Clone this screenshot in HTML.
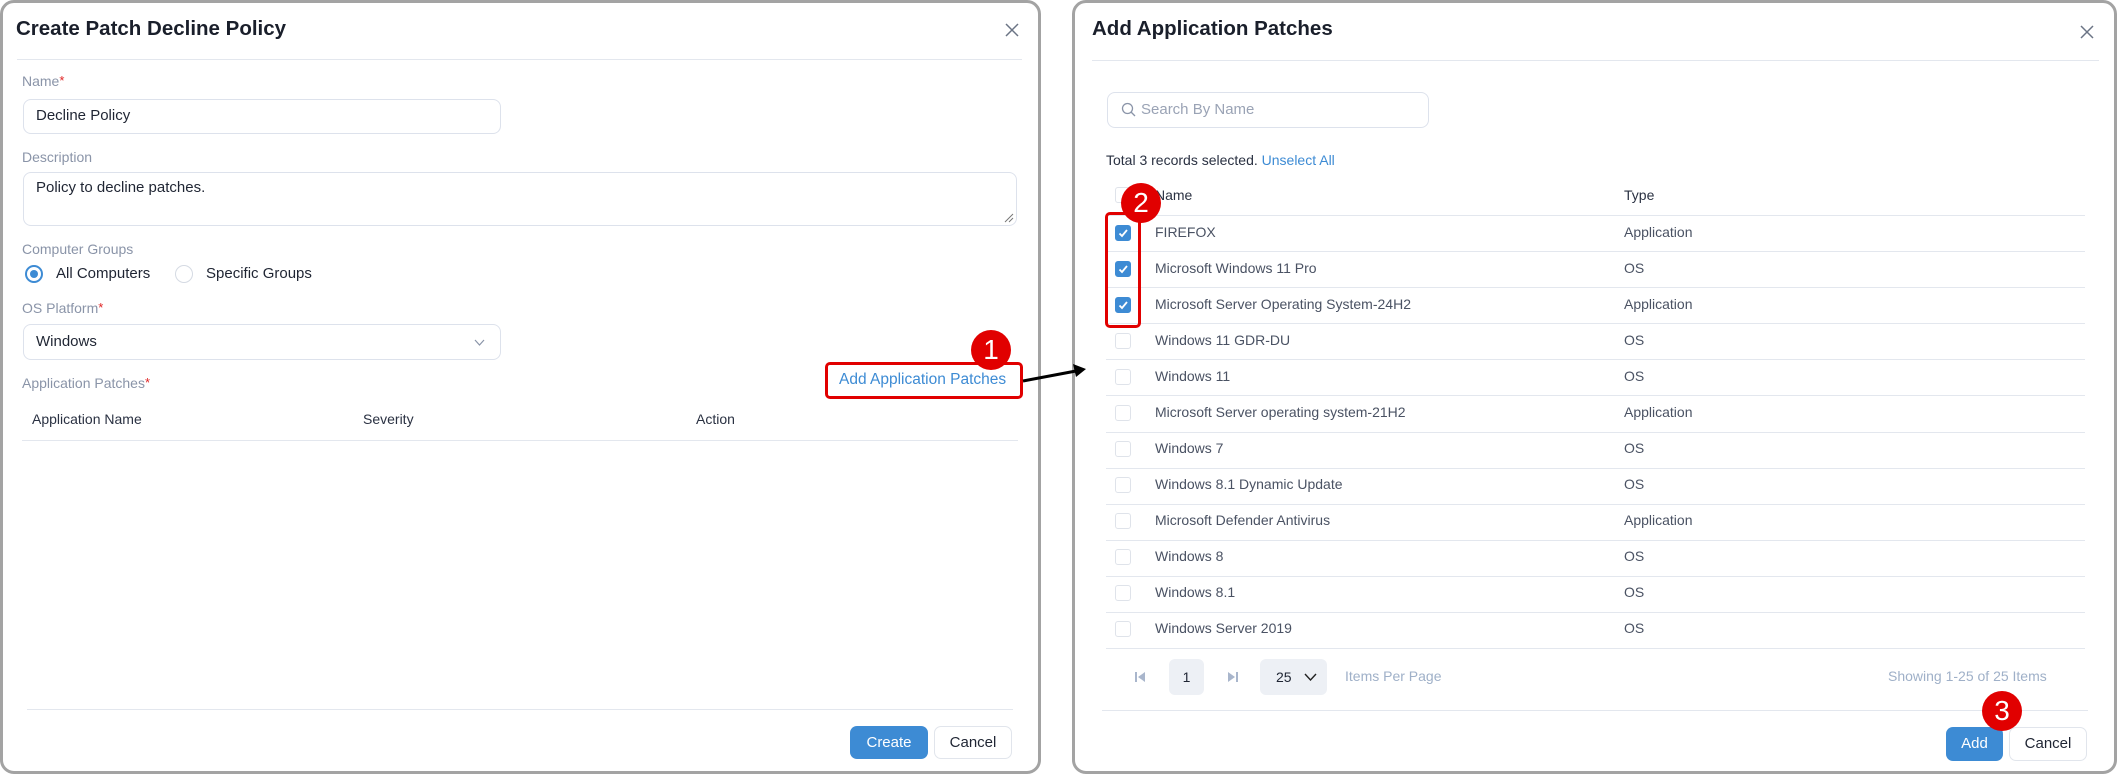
<!DOCTYPE html>
<html><head><meta charset="utf-8"><style>
*{box-sizing:border-box;margin:0;padding:0}
body{width:2117px;height:775px;background:#fff;position:relative;overflow:hidden;font-family:"Liberation Sans",sans-serif;color:#1f2533}
.a{position:absolute;white-space:nowrap}
.panel{position:absolute;border:3px solid #a3a3a3;border-radius:14px;background:#fff}
.lbl{font-size:14px;color:#8a94a8}
.req{color:#e02424;font-size:13px;vertical-align:top}
.inp{position:absolute;border:1px solid #dde2ec;border-radius:8px;background:#fff}
.hl{position:absolute;height:1px;background:#e3e7ee}
.t{font-size:14px;color:#4a5263}
.cb{position:absolute;width:16px;height:16px;border:1px solid #dfe3ea;border-radius:3px;background:#fff}
.cb.on{background:#3d8bd4;border-color:#3d8bd4}
.badge{position:absolute;width:40px;height:40px;border-radius:50%;background:#e10000;color:#fff;font-size:28px;text-align:center;line-height:40px;z-index:3}
.btnp{position:absolute;background:#3d8bd4;color:#fff;border-radius:7px;font-size:15px;text-align:center}
.btn{position:absolute;background:#fff;border:1px solid #e1e5ec;color:#1f2533;border-radius:7px;font-size:15px;text-align:center}
</style></head><body>

<!-- LEFT PANEL -->
<div class="panel" style="left:0;top:0;width:1041px;height:774px"></div>
<div class="a" style="left:16px;top:17px;font-size:20.5px;font-weight:bold;color:#1a1f2b">Create Patch Decline Policy</div>
<svg class="a" style="left:1005px;top:23px" width="14" height="14" viewBox="0 0 14 14"><path d="M1 1L13 13M13 1L1 13" stroke="#6b7485" stroke-width="1.5"/></svg>
<div class="hl" style="left:17px;top:59px;width:1005px"></div>

<div class="a lbl" style="left:22px;top:73px">Name<span class="req">*</span></div>
<div class="inp" style="left:23px;top:99px;width:478px;height:35px"></div>
<div class="a" style="left:36px;top:107px;font-size:15px">Decline Policy</div>

<div class="a lbl" style="left:22px;top:149px">Description</div>
<div class="inp" style="left:23px;top:172px;width:994px;height:54px"></div>
<div class="a" style="left:36px;top:179px;font-size:15px">Policy to decline patches.</div>
<svg class="a" style="left:1004px;top:213px" width="10" height="10"><path d="M9 1L1 9M9 5L5 9" stroke="#777" stroke-width="1"/></svg>

<div class="a lbl" style="left:22px;top:241px">Computer Groups</div>
<div class="a" style="left:25px;top:265px;width:18px;height:18px;border-radius:50%;border:2px solid #3d8bd4"><div style="position:absolute;left:3px;top:3px;width:8px;height:8px;border-radius:50%;background:#3d8bd4"></div></div>
<div class="a" style="left:56px;top:265px;font-size:15px">All Computers</div>
<div class="a" style="left:175px;top:265px;width:18px;height:18px;border-radius:50%;border:1px solid #d5dae3"></div>
<div class="a" style="left:206px;top:265px;font-size:15px">Specific Groups</div>

<div class="a lbl" style="left:22px;top:300px">OS Platform<span class="req">*</span></div>
<div class="inp" style="left:23px;top:324px;width:478px;height:36px"></div>
<div class="a" style="left:36px;top:333px;font-size:15px">Windows</div>
<svg class="a" style="left:474px;top:339px" width="11" height="7"><path d="M1 1L5.5 6L10 1" stroke="#8a94a8" fill="none" stroke-width="1.2"/></svg>

<div class="a lbl" style="left:22px;top:375px">Application Patches<span class="req">*</span></div>
<div class="a" style="left:825px;top:362px;width:198px;height:37px;border:3px solid #e10000;border-radius:5px"></div>
<div class="a" style="left:839px;top:371px;font-size:15.5px;color:#3d8bd4">Add Application Patches</div>
<div class="badge" style="left:971px;top:330px">1</div>

<div class="a" style="left:32px;top:411px;font-size:14px;color:#2a3142">Application Name</div>
<div class="a" style="left:363px;top:411px;font-size:14px;color:#2a3142">Severity</div>
<div class="a" style="left:696px;top:411px;font-size:14px;color:#2a3142">Action</div>
<div class="hl" style="left:22px;top:440px;width:996px"></div>

<div class="hl" style="left:27px;top:709px;width:986px"></div>
<div class="btnp" style="left:850px;top:726px;width:78px;height:33px;line-height:33px">Create</div>
<div class="btn" style="left:934px;top:726px;width:78px;height:33px;line-height:31px">Cancel</div>

<!-- RIGHT PANEL -->
<div class="panel" style="left:1072px;top:0;width:1045px;height:774px"></div>
<svg class="a" style="left:1020px;top:358px;z-index:4" width="70" height="30"><path d="M3 23L56 13" stroke="#000" stroke-width="3"/><path d="M53 6L66 11L56 19Z" fill="#000"/></svg>
<div class="a" style="left:1092px;top:17px;font-size:20.5px;font-weight:bold;color:#1a1f2b">Add Application Patches</div>
<svg class="a" style="left:2080px;top:25px" width="14" height="14" viewBox="0 0 14 14"><path d="M1 1L13 13M13 1L1 13" stroke="#6b7485" stroke-width="1.5"/></svg>
<div class="hl" style="left:1092px;top:60px;width:1007px"></div>

<div class="inp" style="left:1107px;top:92px;width:322px;height:36px"></div>
<svg class="a" style="left:1121px;top:102px" width="16" height="16"><circle cx="6.5" cy="6.5" r="5" stroke="#8a94a8" fill="none" stroke-width="1.3"/><path d="M10 10L14 14" stroke="#8a94a8" stroke-width="1.3"/></svg>
<div class="a" style="left:1141px;top:101px;font-size:15px;color:#9aa3b5">Search By Name</div>

<div class="a" style="left:1106px;top:152px;font-size:14px;color:#2a3142">Total 3 records selected. <span style="color:#3d8bd4">Unselect All</span></div>

<div class="cb" style="left:1115px;top:187px"></div>
<div class="a" style="left:1155px;top:187px;font-size:14px;color:#2a3142">Name</div>
<div class="a" style="left:1624px;top:187px;font-size:14px;color:#2a3142">Type</div>
<div class="hl" style="left:1106px;top:215px;width:979px"></div>

<div class="cb on" style="left:1115px;top:225px"><svg width="14" height="14" style="position:absolute;left:0;top:0"><path d="M3.5 7.5L6 10L11 4" stroke="#fff" stroke-width="1.8" fill="none"/></svg></div>
<div class="a t" style="left:1155px;top:224px">FIREFOX</div><div class="a t" style="left:1624px;top:224px">Application</div>
<div class="hl" style="left:1106px;top:251px;width:979px"></div>

<div class="cb on" style="left:1115px;top:261px"><svg width="14" height="14" style="position:absolute;left:0;top:0"><path d="M3.5 7.5L6 10L11 4" stroke="#fff" stroke-width="1.8" fill="none"/></svg></div>
<div class="a t" style="left:1155px;top:260px">Microsoft Windows 11 Pro</div><div class="a t" style="left:1624px;top:260px">OS</div>
<div class="hl" style="left:1106px;top:287px;width:979px"></div>

<div class="cb on" style="left:1115px;top:297px"><svg width="14" height="14" style="position:absolute;left:0;top:0"><path d="M3.5 7.5L6 10L11 4" stroke="#fff" stroke-width="1.8" fill="none"/></svg></div>
<div class="a t" style="left:1155px;top:296px">Microsoft Server Operating System-24H2</div><div class="a t" style="left:1624px;top:296px">Application</div>
<div class="hl" style="left:1106px;top:323px;width:979px"></div>

<div class="cb" style="left:1115px;top:333px"></div>
<div class="a t" style="left:1155px;top:332px">Windows 11 GDR-DU</div><div class="a t" style="left:1624px;top:332px">OS</div>
<div class="hl" style="left:1106px;top:359px;width:979px"></div>

<div class="cb" style="left:1115px;top:369px"></div>
<div class="a t" style="left:1155px;top:368px">Windows 11</div><div class="a t" style="left:1624px;top:368px">OS</div>
<div class="hl" style="left:1106px;top:395px;width:979px"></div>

<div class="cb" style="left:1115px;top:405px"></div>
<div class="a t" style="left:1155px;top:404px">Microsoft Server operating system-21H2</div><div class="a t" style="left:1624px;top:404px">Application</div>
<div class="hl" style="left:1106px;top:432px;width:979px"></div>

<div class="cb" style="left:1115px;top:441px"></div>
<div class="a t" style="left:1155px;top:440px">Windows 7</div><div class="a t" style="left:1624px;top:440px">OS</div>
<div class="hl" style="left:1106px;top:468px;width:979px"></div>

<div class="cb" style="left:1115px;top:477px"></div>
<div class="a t" style="left:1155px;top:476px">Windows 8.1 Dynamic Update</div><div class="a t" style="left:1624px;top:476px">OS</div>
<div class="hl" style="left:1106px;top:504px;width:979px"></div>

<div class="cb" style="left:1115px;top:513px"></div>
<div class="a t" style="left:1155px;top:512px">Microsoft Defender Antivirus</div><div class="a t" style="left:1624px;top:512px">Application</div>
<div class="hl" style="left:1106px;top:540px;width:979px"></div>

<div class="cb" style="left:1115px;top:549px"></div>
<div class="a t" style="left:1155px;top:548px">Windows 8</div><div class="a t" style="left:1624px;top:548px">OS</div>
<div class="hl" style="left:1106px;top:576px;width:979px"></div>

<div class="cb" style="left:1115px;top:585px"></div>
<div class="a t" style="left:1155px;top:584px">Windows 8.1</div><div class="a t" style="left:1624px;top:584px">OS</div>
<div class="hl" style="left:1106px;top:612px;width:979px"></div>

<div class="cb" style="left:1115px;top:621px"></div>
<div class="a t" style="left:1155px;top:620px">Windows Server 2019</div><div class="a t" style="left:1624px;top:620px">OS</div>
<div class="hl" style="left:1106px;top:648px;width:979px"></div>

<div class="a" style="left:1105px;top:212px;width:36px;height:116px;border:3px solid #e10000;border-radius:5px"></div>
<div class="badge" style="left:1121px;top:183px">2</div>

<!-- pagination -->
<svg class="a" style="left:1135px;top:671px" width="12" height="12"><rect x="0" y="1" width="2" height="10" fill="#a9b6cc"/><path d="M10 1L3 6L10 11Z" fill="#a9b6cc"/></svg>
<div class="a" style="left:1169px;top:659px;width:35px;height:36px;background:#edf0f5;border-radius:6px;text-align:center;line-height:36px;font-size:14px">1</div>
<svg class="a" style="left:1227px;top:671px" width="12" height="12"><path d="M1 1L8 6L1 11Z" fill="#a9b6cc"/><rect x="9" y="1" width="2" height="10" fill="#a9b6cc"/></svg>
<div class="a" style="left:1260px;top:659px;width:67px;height:36px;background:#edf0f5;border-radius:6px;font-size:14px;line-height:36px;padding-left:16px">25</div>
<svg class="a" style="left:1304px;top:673px" width="13" height="8"><path d="M1 1L6.5 7L12 1" stroke="#222" fill="none" stroke-width="1.4"/></svg>
<div class="a" style="left:1345px;top:668px;font-size:14px;color:#9fb0c8">Items Per Page</div>
<div class="a" style="left:1888px;top:668px;font-size:14px;color:#9fb0c8">Showing 1-25 of 25 Items</div>

<div class="hl" style="left:1102px;top:710px;width:986px"></div>
<div class="btnp" style="left:1946px;top:727px;width:57px;height:34px;line-height:34px">Add</div>
<div class="btn" style="left:2009px;top:727px;width:78px;height:34px;line-height:32px">Cancel</div>
<div class="badge" style="left:1982px;top:691px">3</div>

</body></html>
